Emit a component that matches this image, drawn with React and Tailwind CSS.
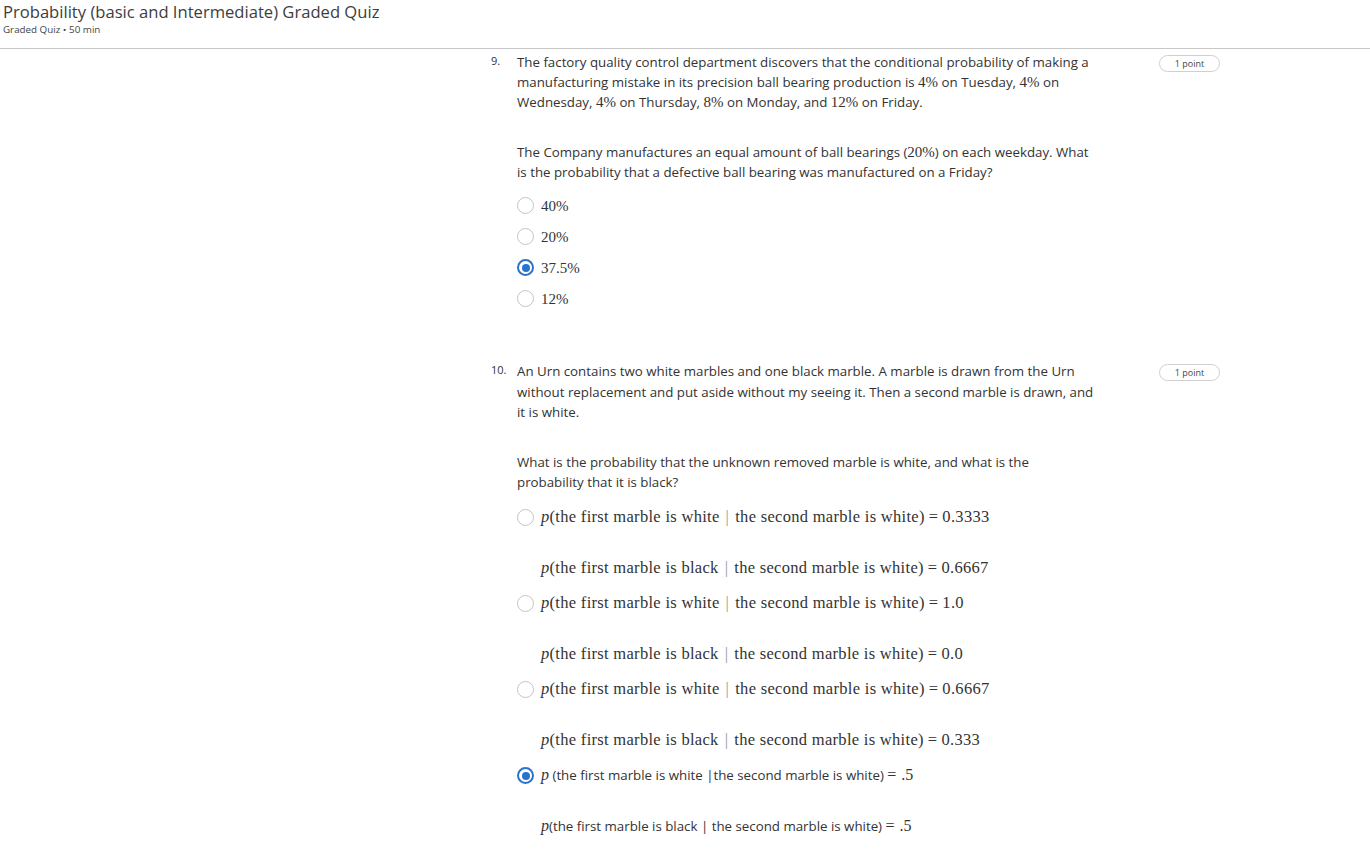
import React from "react";

const sans = "font-['Open_Sans',sans-serif]";
const serif = "font-['Liberation_Serif',serif]";

// 数式部分（KaTeX 風のセリフ体）
function M({ children }) {
    return <span className={`${serif} text-[15px]`}>{children}</span>;
}

function Eq() {
    return <span className="mx-[4px]">=</span>;
}

function Radio({ checked }) {
    return checked ? (
        <span className="flex h-[17px] w-[17px] shrink-0 items-center justify-center rounded-full border-2 border-[#2a73cc]">
            <span className="h-[8px] w-[8px] rounded-full bg-[#2a73cc]" />
        </span>
    ) : (
        <span className="h-[17px] w-[17px] shrink-0 rounded-full border-[1.5px] border-[#c4c4c4]" />
    );
}

function Badge() {
    return (
        <div className="ml-auto mt-[3px] flex h-[17px] w-[61px] shrink-0 items-center justify-center rounded-full border border-[#cfcfcf] text-[9px] text-[#444]">
            1 point
        </div>
    );
}

const q9Options = [
    { label: "40%", checked: false },
    { label: "20%", checked: false },
    { label: "37.5%", checked: true },
    { label: "12%", checked: false },
];

function Cond({ first, value }) {
    return (
        <span className={`${serif} text-[16.5px] tracking-[0.3px]`}>
            <i>p</i>(the first marble is {first}
            <span className="mx-[6px] text-[#999]">|</span>the second marble is white)<Eq />{value}
        </span>
    );
}

const q10Options = [
    { white: "0.3333", black: "0.6667" },
    { white: "1.0", black: "0.0" },
    { white: "0.6667", black: "0.333" },
];

export default function App() {
    return (
        <div className={`${sans} min-h-[852px] w-[1370px] bg-white text-[#333]`}>
            <header className="h-[49px] border-b border-[#c8c8c8] pl-[3px]">
                <h1 className="pt-[1px] text-[16.6px] leading-[22px] text-[#3d3d3d]">
                    Probability (basic and Intermediate) Graded Quiz
                </h1>
                <p className="mt-[1px] text-[9.8px] leading-[12px] text-[#444]">Graded Quiz • 50 min</p>
            </header>

            <main className="pl-[491px] pt-[3px]">
                {/* 問題 9 */}
                <section className="flex w-[729px]">
                    <div className="w-[26px] shrink-0 text-[11px] leading-[18px]">9.</div>
                    <div className="w-[580px] text-[13.3px] leading-[20px]">
                        <p>
                            The factory quality control department discovers that the conditional probability of making a
                            manufacturing mistake in its precision ball bearing production is <M>4%</M> on Tuesday, <M>4%</M> on
                            Wednesday, <M>4%</M> on Thursday, <M>8%</M> on Monday, and <M>12%</M> on Friday.
                        </p>
                        <p className="mt-[30px]">
                            The Company manufactures an equal amount of ball bearings (<M>20%</M>) on each weekday. What is the
                            probability that a defective ball bearing was manufactured on a Friday?
                        </p>
                        <div className="mt-[8px]">
                            {q9Options.map((o) => (
                                <label key={o.label} className="flex h-[31px] items-center gap-[7px]">
                                    <Radio checked={o.checked} />
                                    <span className={`${serif} text-[15px] text-[#333]`}>{o.label}</span>
                                </label>
                            ))}
                        </div>
                    </div>
                    <Badge />
                </section>

                {/* 問題 10 */}
                <section className="mt-[47px] flex w-[729px]">
                    <div className="w-[26px] shrink-0 text-[11px] leading-[18px]">10.</div>
                    <div className="w-[580px] text-[13.3px] leading-[20.5px]">
                        <p>
                            An Urn contains two white marbles and one black marble. A marble is drawn from the Urn without
                            replacement and put aside without my seeing it. Then a second marble is drawn, and it is white.
                        </p>
                        <p className="mt-[29px] leading-[20px]">
                            What is the probability that the unknown removed marble is white, and what is the probability that it
                            is black?
                        </p>
                        <div className="mt-[16px] flex flex-col gap-[15px]">
                            {q10Options.map((o) => (
                                <div key={o.white}>
                                    <div className="flex h-[20px] items-center gap-[7px]">
                                        <Radio />
                                        <Cond first="white" value={o.white} />
                                    </div>
                                    <div className="mt-[31px] flex h-[20px] items-center pl-[24px]">
                                        <Cond first="black" value={o.black} />
                                    </div>
                                </div>
                            ))}
                            <div>
                                <div className="flex h-[20px] items-center gap-[7px]">
                                    <Radio checked />
                                    <span>
                                        <span className={`${serif} text-[16px]`}><i>p</i></span> (the first marble is white |the
                                        second marble is white) <span className={`${serif} text-[16px]`}>=<span className="ml-[5px]">.5</span></span>
                                    </span>
                                </div>
                                <div className="mt-[31px] flex h-[20px] items-center pl-[24px]">
                                    <span>
                                        <span className={`${serif} text-[16px]`}><i>p</i></span>(the first marble is black | the
                                        second marble is white) <span className={`${serif} text-[16px]`}>=<span className="ml-[5px]">.5</span></span>
                                    </span>
                                </div>
                            </div>
                        </div>
                    </div>
                    <Badge />
                </section>
            </main>
        </div>
    );
}
